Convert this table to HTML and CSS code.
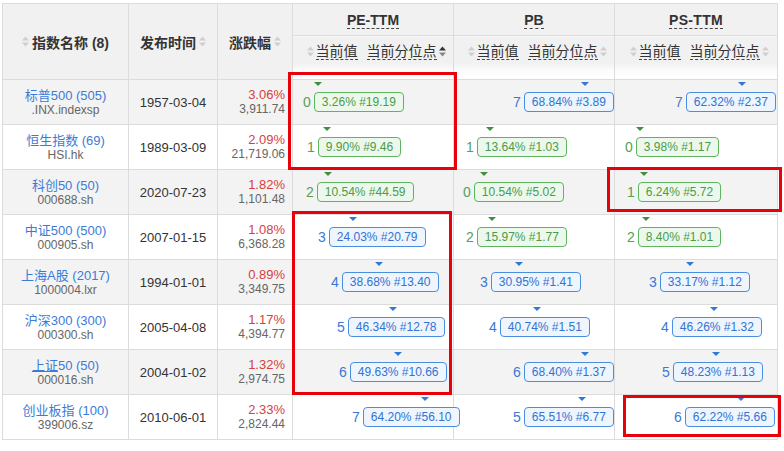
FILE: index.html
```html
<!DOCTYPE html>
<html lang="zh-CN">
<head>
<meta charset="utf-8">
<title>指数估值</title>
<link rel="stylesheet" href="styles.css">
</head>
<body>
<div class="page">
  <table class="tbl">
    <colgroup>
      <col class="c1"><col class="c2"><col class="c3"><col class="c4"><col class="c5"><col class="c6">
    </colgroup>
    <thead>
      <tr class="h1">
        <th rowspan="2" class="hs"><span class="hl"><svg class="si" viewBox="0 0 7 11"><path d="M0 4.5L3.5 0.5L7 4.5Z"/><path d="M0 6.5L3.5 10.5L7 6.5Z"/></svg>指数名称 (8)</span></th>
        <th rowspan="2" class="hs"><span class="hl">发布时间<svg class="si" viewBox="0 0 7 11"><path d="M0 4.5L3.5 0.5L7 4.5Z"/><path d="M0 6.5L3.5 10.5L7 6.5Z"/></svg></span></th>
        <th rowspan="2" class="hs"><span class="hl">涨跌幅<svg class="si" viewBox="0 0 7 11"><path d="M0 4.5L3.5 0.5L7 4.5Z"/><path d="M0 6.5L3.5 10.5L7 6.5Z"/></svg></span></th>
        <th class="hm"><span class="dl">PE-TTM</span></th>
        <th class="hm"><span class="dl">PB</span></th>
        <th class="hm"><span class="dl sp">PS-TTM</span></th>
      </tr>
      <tr class="h2">
        <th class="hsub"><div class="sub"><span class="sl"><svg class="si" viewBox="0 0 7 11"><path d="M0 4.5L3.5 0.5L7 4.5Z"/><path d="M0 6.5L3.5 10.5L7 6.5Z"/></svg><span class="dl">当前值</span></span><span class="sl"><span class="dl">当前分位点</span><svg class="si act" viewBox="0 0 7 11"><path class="up" d="M0 4.5L3.5 0.5L7 4.5Z"/><path class="dn" d="M0 6.5L3.5 10.5L7 6.5Z"/></svg></span></div></th>
        <th class="hsub"><div class="sub"><span class="sl"><svg class="si" viewBox="0 0 7 11"><path d="M0 4.5L3.5 0.5L7 4.5Z"/><path d="M0 6.5L3.5 10.5L7 6.5Z"/></svg><span class="dl">当前值</span></span><span class="sl"><span class="dl">当前分位点</span><svg class="si" viewBox="0 0 7 11"><path d="M0 4.5L3.5 0.5L7 4.5Z"/><path d="M0 6.5L3.5 10.5L7 6.5Z"/></svg></span></div></th>
        <th class="hsub"><div class="sub"><span class="sl"><svg class="si" viewBox="0 0 7 11"><path d="M0 4.5L3.5 0.5L7 4.5Z"/><path d="M0 6.5L3.5 10.5L7 6.5Z"/></svg><span class="dl">当前值</span></span><span class="sl"><span class="dl">当前分位点</span><svg class="si" viewBox="0 0 7 11"><path d="M0 4.5L3.5 0.5L7 4.5Z"/><path d="M0 6.5L3.5 10.5L7 6.5Z"/></svg></span></div></th>
      </tr>
    </thead>
    <tbody>
      <tr class="odd">
        <td class="nm"><a class="lk">标普500 (505)</a><div class="cd">.INX.indexsp</div></td>
        <td class="dt">1957-03-04</td>
        <td class="chg"><div class="pct">3.06%</div><div class="cd">3,911.74</div></td>
        <td class="v"><div class="grp g" style="--x:10px"><span class="rk">0</span><span class="bd" style="--p:3.26%">3.26% #19.19</span></div></td>
        <td class="v"><div class="grp b" style="--x:59px"><span class="rk">7</span><span class="bd" style="--p:68.84%">68.84% #3.89</span></div></td>
        <td class="v"><div class="grp b" style="--x:60px"><span class="rk">7</span><span class="bd" style="--p:62.32%">62.32% #2.37</span></div></td>
      </tr>
      <tr>
        <td class="nm"><a class="lk">恒生指数 (69)</a><div class="cd">HSI.hk</div></td>
        <td class="dt">1989-03-09</td>
        <td class="chg"><div class="pct">2.09%</div><div class="cd">21,719.06</div></td>
        <td class="v"><div class="grp g" style="--x:14px"><span class="rk">1</span><span class="bd" style="--p:9.90%">9.90% #9.46</span></div></td>
        <td class="v"><div class="grp g" style="--x:12px"><span class="rk">1</span><span class="bd" style="--p:13.64%">13.64% #1.03</span></div></td>
        <td class="v"><div class="grp g" style="--x:10px"><span class="rk">0</span><span class="bd" style="--p:3.98%">3.98% #1.17</span></div></td>
      </tr>
      <tr class="odd">
        <td class="nm"><a class="lk">科创50 (50)</a><div class="cd">000688.sh</div></td>
        <td class="dt">2020-07-23</td>
        <td class="chg"><div class="pct">1.82%</div><div class="cd">1,101.48</div></td>
        <td class="v"><div class="grp g" style="--x:13px"><span class="rk">2</span><span class="bd" style="--p:10.54%">10.54% #44.59</span></div></td>
        <td class="v"><div class="grp g" style="--x:9px"><span class="rk">0</span><span class="bd" style="--p:10.54%">10.54% #5.02</span></div></td>
        <td class="v"><div class="grp g" style="--x:12px"><span class="rk">1</span><span class="bd" style="--p:6.24%">6.24% #5.72</span></div></td>
      </tr>
      <tr>
        <td class="nm"><a class="lk">中证500 (500)</a><div class="cd">000905.sh</div></td>
        <td class="dt">2007-01-15</td>
        <td class="chg"><div class="pct">1.08%</div><div class="cd">6,368.28</div></td>
        <td class="v"><div class="grp b" style="--x:25px"><span class="rk">3</span><span class="bd" style="--p:24.03%">24.03% #20.79</span></div></td>
        <td class="v"><div class="grp g" style="--x:12px"><span class="rk">2</span><span class="bd" style="--p:15.97%">15.97% #1.77</span></div></td>
        <td class="v"><div class="grp g" style="--x:12px"><span class="rk">2</span><span class="bd" style="--p:8.40%">8.40% #1.01</span></div></td>
      </tr>
      <tr class="odd">
        <td class="nm"><a class="lk">上海A股 (2017)</a><div class="cd">1000004.lxr</div></td>
        <td class="dt">1994-01-01</td>
        <td class="chg"><div class="pct">0.89%</div><div class="cd">3,349.75</div></td>
        <td class="v"><div class="grp b" style="--x:38px"><span class="rk">4</span><span class="bd" style="--p:38.68%">38.68% #13.40</span></div></td>
        <td class="v"><div class="grp b" style="--x:26px"><span class="rk">3</span><span class="bd" style="--p:30.95%">30.95% #1.41</span></div></td>
        <td class="v"><div class="grp b" style="--x:34px"><span class="rk">3</span><span class="bd" style="--p:33.17%">33.17% #1.12</span></div></td>
      </tr>
      <tr>
        <td class="nm"><a class="lk">沪深300 (300)</a><div class="cd">000300.sh</div></td>
        <td class="dt">2005-04-08</td>
        <td class="chg"><div class="pct">1.17%</div><div class="cd">4,394.77</div></td>
        <td class="v"><div class="grp b" style="--x:44px"><span class="rk">5</span><span class="bd" style="--p:46.34%">46.34% #12.78</span></div></td>
        <td class="v"><div class="grp b" style="--x:35px"><span class="rk">4</span><span class="bd" style="--p:40.74%">40.74% #1.51</span></div></td>
        <td class="v"><div class="grp b" style="--x:46px"><span class="rk">4</span><span class="bd" style="--p:46.26%">46.26% #1.32</span></div></td>
      </tr>
      <tr class="odd">
        <td class="nm"><a class="lk"><span class="hov">上证</span>50 (50)</a><div class="cd">000016.sh</div></td>
        <td class="dt">2004-01-02</td>
        <td class="chg"><div class="pct">1.32%</div><div class="cd">2,974.75</div></td>
        <td class="v"><div class="grp b" style="--x:46px"><span class="rk">6</span><span class="bd" style="--p:49.63%">49.63% #10.66</span></div></td>
        <td class="v"><div class="grp b" style="--x:59px"><span class="rk">6</span><span class="bd" style="--p:68.40%">68.40% #1.37</span></div></td>
        <td class="v"><div class="grp b" style="--x:47px"><span class="rk">5</span><span class="bd" style="--p:48.23%">48.23% #1.13</span></div></td>
      </tr>
      <tr>
        <td class="nm"><a class="lk">创业板指 (100)</a><div class="cd">399006.sz</div></td>
        <td class="dt">2010-06-01</td>
        <td class="chg"><div class="pct">2.33%</div><div class="cd">2,824.44</div></td>
        <td class="v"><div class="grp b" style="--x:59px"><span class="rk">7</span><span class="bd" style="--p:64.20%">64.20% #56.10</span></div></td>
        <td class="v"><div class="grp b" style="--x:59px"><span class="rk">5</span><span class="bd" style="--p:65.51%">65.51% #6.77</span></div></td>
        <td class="v"><div class="grp b" style="--x:59px"><span class="rk">6</span><span class="bd" style="--p:62.22%">62.22% #5.66</span></div></td>
      </tr>
    </tbody>
  </table>
  <div class="mark m1"></div>
  <div class="mark m2"></div>
  <div class="mark m3"></div>
  <div class="mark m4"></div>
</div>
</body>
</html>
```

FILE: styles.css
```css
html, body {
  margin: 0;
  padding: 0;
  background: #fff;
}
body {
  font-family: "Liberation Sans", "Noto Sans CJK SC", sans-serif;
  color: #333;
}
.page {
  position: relative;
  padding: 3px 0 0 2px;
  width: 782px;
  height: 448px;
}
.tbl {
  border-collapse: collapse;
  table-layout: fixed;
  width: 776px;
}
.c1 { width: 126px; }
.c2 { width: 89px; }
.c3 { width: 75px; }
.c4 { width: 161px; }
.c5 { width: 161px; }
.c6 { width: 163px; }

th, td {
  border: 1px solid #dcdcdc;
  padding: 0;
}
thead th {
  background: #f1f1f1;
  color: #333;
}
.h1 { height: 32px; }
.h2 { height: 44px; }
.hs {
  font-size: 14px;
  font-weight: bold;
  text-align: center;
  vertical-align: middle;
}
.hl {
  display: inline-flex;
  align-items: center;
  gap: 3px;
}
.si {
  width: 7px;
  height: 11px;
  fill: #cfcfcf;
  flex: none;
}
.si.act .up { fill: #333; }
.si.act .dn { fill: #888; }
.hm {
  font-size: 14px;
  font-weight: bold;
  text-align: center;
  vertical-align: middle;
  padding-top: 2px;
}
.dl {
  border-bottom: 1px dashed #444;
  line-height: 16px;
  display: inline-block;
}
.sp { letter-spacing: 0.3px; }
.hsub {
  vertical-align: top;
  font-weight: normal;
  font-size: 14px;
  background: linear-gradient(#f1f1f1 0, #f1f1f1 62%, #fbfbfb 78%, #fff 100%);
}
.sub {
  display: flex;
  justify-content: center;
  gap: 9px;
  padding: 7px 0 0 6px;
}
.sl {
  display: inline-flex;
  align-items: center;
  gap: 2px;
}

tbody tr { height: 45px; background: #fff; }
tbody tr.odd { background: #f3f3f3; }
td.nm {
  text-align: center;
  vertical-align: middle;
  line-height: 15px;
}
.lk {
  color: #3b7bd8;
  font-size: 13px;
}
.hov { text-decoration: underline; }
.cd {
  color: #666;
  font-size: 12px;
}
td.dt {
  text-align: center;
  vertical-align: middle;
  font-size: 13px;
  color: #333;
}
td.chg {
  text-align: right;
  vertical-align: middle;
  padding-right: 7px;
  line-height: 15px;
}
.pct {
  color: #d5413f;
  font-size: 13px;
}
td.v {
  vertical-align: top;
  padding-top: 12px;
  white-space: nowrap;
}
.grp {
  display: inline-flex;
  align-items: center;
  gap: 3px;
  margin-left: var(--x);
  position: relative;
  z-index: 1;
}
.rk {
  font-size: 14px;
  line-height: 20px;
}
.bd {
  position: relative;
  font-size: 12px;
  line-height: 18px;
  padding: 0 7px;
  border: 1px solid;
  border-radius: 4px;
}
.bd::before {
  content: "";
  position: absolute;
  top: -11px;
  left: var(--p);
  transform: translateX(-50%);
  border-left: 4px solid transparent;
  border-right: 4px solid transparent;
  border-top: 4px solid;
}
.g .rk { color: #55a055; }
.g .bd {
  color: #4b9b4b;
  border-color: #5fb55f;
  background: #edf8ed;
}
.g .bd::before { border-top-color: #3f8f3f; }
.b .rk { color: #3a78d6; }
.b .bd {
  color: #3373d2;
  border-color: #4a8ee2;
  background: #eef5fd;
}
.b .bd::before { border-top-color: #2f7ad8; }

.mark {
  position: absolute;
  border: 3px solid #e8000b;
  box-sizing: border-box;
  z-index: 2;
}
.m1 { left: 288px; top: 72px; width: 169px; height: 98px; }
.m2 { left: 607px; top: 167px; width: 175px; height: 45px; }
.m3 { left: 292px; top: 211px; width: 160px; height: 184px; }
.m4 { left: 623px; top: 395px; width: 158px; height: 42px; }
```
